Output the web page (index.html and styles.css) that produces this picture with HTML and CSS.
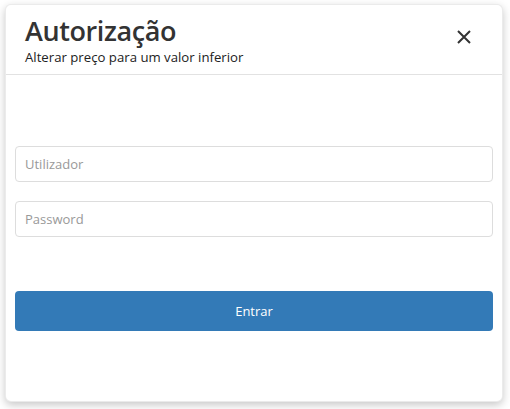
FILE: index.html
```html
<!DOCTYPE html>
<html lang="pt">
<head>
<meta charset="utf-8">
<title>Autorização</title>
<link rel="stylesheet" href="styles.css">
</head>
<body>
<div class="modal">
  <div class="modal-header">
    <div class="titles">
      <h1 class="title">Autorização</h1>
      <p class="subtitle">Alterar preço para um valor inferior</p>
    </div>
    <button class="close" type="button" aria-label="Fechar">
      <svg width="14" height="14" viewBox="0 0 14 14"><path d="M1 1L13 13M13 1L1 13" stroke="#333" stroke-width="2" fill="none"/></svg>
    </button>
  </div>
  <div class="modal-body">
    <input class="field" type="text" placeholder="Utilizador">
    <input class="field" type="password" placeholder="Password">
    <button class="btn" type="button">Entrar</button>
  </div>
</div>
</body>
</html>
```

FILE: styles.css
```css
* { box-sizing: border-box; }
html, body { margin: 0; padding: 0; background: #fff; }
body {
  width: 510px;
  height: 409px;
  font-family: "Open Sans", "Noto Sans", sans-serif;
  color: #333;
  padding: 4px 7px 7px 5px;
}
.modal {
  height: 398px;
  background: #fff;
  border-radius: 6px;
  border: 1px solid rgba(0,0,0,0.08);
  box-shadow: 0 3px 8px rgba(0,0,0,0.22);
  display: flex;
  flex-direction: column;
}
.modal-header {
  height: 70px;
  border-bottom: 1px solid #e2e2e2;
  padding: 8px 31px 0 19px;
  display: flex;
  align-items: flex-start;
  justify-content: space-between;
}
.title {
  margin: 0;
  font-size: 27px;
  font-weight: 600;
  letter-spacing: -0.4px;
  line-height: 35px;
  color: #333;
}
.subtitle {
  margin: 0;
  font-size: 13.2px;
  line-height: 18px;
  color: #222;
}
.close {
  border: 0;
  background: none;
  padding: 0;
  margin-top: 17px;
  width: 14px;
  height: 14px;
  display: flex;
  cursor: pointer;
}
.modal-body {
  padding: 71px 9px 0 9px;
  display: flex;
  flex-direction: column;
}
.field {
  height: 36px;
  border: 1px solid #ddd;
  border-radius: 4px;
  padding: 0 9px;
  font-family: inherit;
  font-size: 13px;
  color: #333;
  margin-bottom: 19px;
}
.field::placeholder { color: #999; }
.btn {
  margin-top: 35px;
  height: 40px;
  border: 0;
  border-radius: 4px;
  background: #337ab7;
  color: #fff;
  font-family: inherit;
  font-size: 13px;
}
```
